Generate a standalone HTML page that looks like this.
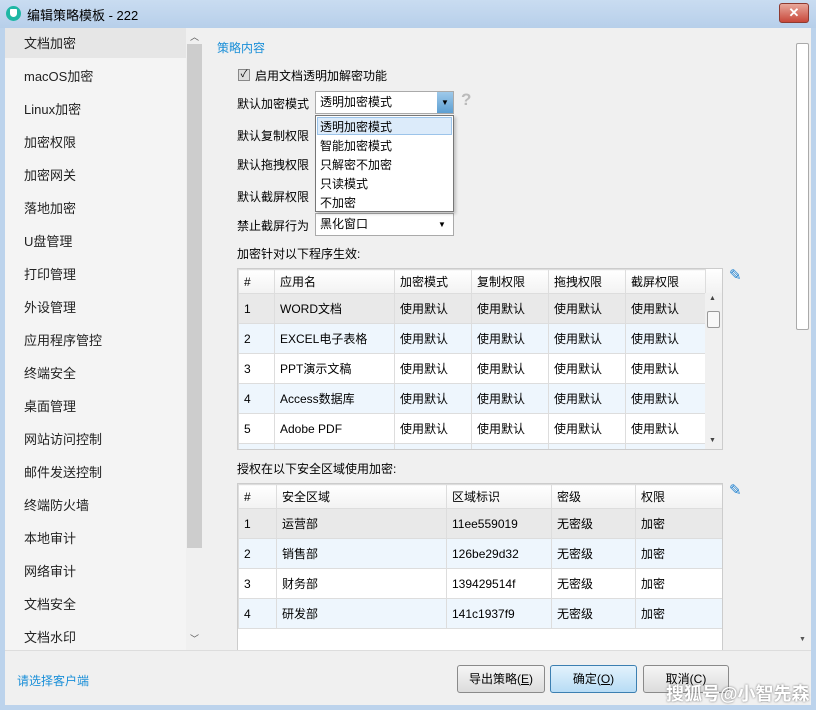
<!DOCTYPE html>
<html><head><meta charset="utf-8"><style>
*{margin:0;padding:0;box-sizing:border-box}
body{width:816px;height:710px;overflow:hidden;background:#bcd3ec;font-family:"Liberation Sans","Noto Sans CJK SC",sans-serif;font-size:12px;color:#000;position:relative}
.a{position:absolute}
.title{left:0;top:0;width:816px;height:28px;background:linear-gradient(#c9dcf1,#b7cfea)}
.side{left:5px;top:28px;width:181px;height:622px;background:#f4f4f4}
.side div{position:absolute;left:19px;font-size:13px;color:#222}
.cont{left:204px;top:28px;width:591px;height:622px;background:#f0f0f0}
.bot{left:5px;top:650px;width:806px;height:55px;background:#f0f0f0;border-top:1px solid #ddd}
.wrap{position:absolute;overflow:hidden;border:1px solid #ccc;background:#fff}
table{border-collapse:collapse;background:#fff;table-layout:fixed}
td{border:1px solid #ddd;padding-left:5px;font-size:12px;height:30px;white-space:nowrap;overflow:hidden}
tr.h td{height:24px;background:linear-gradient(#fff,#f2f2f2)}
tr.s td{background:#e9e9e9}
tr.b td{background:#eef6fd}
.btn{position:absolute;top:665px;height:28px;border:1px solid #8a8a8a;border-radius:3px;background:linear-gradient(#f6f6f6,#dcdcdc);text-align:center;line-height:26px;font-size:12px}
.combo{position:absolute;background:#fff;border:1px solid #aaa;height:23px;line-height:21px;padding-left:4px;font-size:12px}
.lbl{position:absolute;font-size:12px}
</style></head><body>
<div class="a title"></div>
<div class="a" style="left:6px;top:6px;width:15px;height:15px;border-radius:50%;background:#1fb7a4"></div>
<div class="a" style="left:10px;top:9px;width:7px;height:8px;background:#fff;border-radius:1px 1px 4px 4px"></div>
<div class="a" style="left:27px;top:5px;font-size:13px">编辑策略模板 - 222</div>
<div class="a" style="left:779px;top:3px;width:30px;height:20px;background:linear-gradient(#e8a89c,#c8483a);border:1px solid #8e3a30;border-radius:3px;color:#fff;text-align:center;line-height:18px;font-size:13px;font-weight:bold">✕</div>
<div class="a side">
<div style="left:0;top:0;width:181px;height:30px;background:#e6e6e6"></div>
<div style="top:5px">文档加密</div><div style="top:38px">macOS加密</div><div style="top:71px">Linux加密</div><div style="top:104px">加密权限</div><div style="top:137px">加密网关</div><div style="top:170px">落地加密</div><div style="top:203px">U盘管理</div><div style="top:236px">打印管理</div><div style="top:269px">外设管理</div><div style="top:302px">应用程序管控</div><div style="top:335px">终端安全</div><div style="top:368px">桌面管理</div><div style="top:401px">网站访问控制</div><div style="top:434px">邮件发送控制</div><div style="top:467px">终端防火墙</div><div style="top:500px">本地审计</div><div style="top:533px">网络审计</div><div style="top:566px">文档安全</div><div style="top:599px">文档水印</div>
</div>
<div class="a" style="left:186px;top:28px;width:18px;height:622px;background:#f0f0f0"></div>
<div class="a" style="left:187px;top:44px;width:15px;height:504px;background:#cdcdcd"></div>
<div class="a" style="left:190px;top:30px;font-size:9px;color:#555">︿</div>
<div class="a" style="left:190px;top:632px;font-size:9px;color:#555">﹀</div>
<div class="a cont"></div>
<div class="a" style="left:795px;top:28px;width:16px;height:622px;background:#f0f0f0"></div>
<div class="a" style="left:796px;top:43px;width:13px;height:287px;background:#fff;border:1px solid #aaa;border-radius:2px"></div>
<div class="a" style="left:217px;top:39px;color:#1a8fd8;font-size:12px">策略内容</div>
<div class="a" style="left:238px;top:69px;width:12px;height:12px;border:1px solid #888;background:#ddd;font-size:10px;line-height:10px;text-align:center">✓</div>
<div class="lbl" style="left:255px;top:67px">启用文档透明加解密功能</div>
<div class="lbl" style="left:237px;top:95px">默认加密模式</div>
<div class="lbl" style="left:237px;top:127px">默认复制权限</div>
<div class="lbl" style="left:237px;top:156px">默认拖拽权限</div>
<div class="lbl" style="left:237px;top:188px">默认截屏权限</div>
<div class="lbl" style="left:237px;top:217px">禁止截屏行为</div>
<div class="combo" style="left:315px;top:91px;width:139px">透明加密模式</div>
<div class="a" style="left:437px;top:92px;width:16px;height:21px;background:linear-gradient(#9ec9ea,#5d9fd2);font-size:8px;text-align:center;line-height:21px">▼</div>
<div class="a" style="left:461px;top:90px;font-size:17px;font-weight:bold;color:#bbb">?</div>
<div class="combo" style="left:315px;top:213px;width:139px">黑化窗口<span style="position:absolute;left:122px;font-size:8px">▼</span></div>
<div class="a" style="left:315px;top:115px;width:139px;height:97px;background:#fff;border:1px solid #777;box-shadow:2px 2px 3px rgba(0,0,0,.2)"></div>
<div class="a" style="left:317px;top:117px;width:135px;height:18px;background:#dcebfa;border:1px solid #9cc4ea"></div>
<div class="lbl" style="left:320px;top:118px">透明加密模式</div>
<div class="lbl" style="left:320px;top:137px">智能加密模式</div>
<div class="lbl" style="left:320px;top:156px">只解密不加密</div>
<div class="lbl" style="left:320px;top:175px">只读模式</div>
<div class="lbl" style="left:320px;top:194px">不加密</div>
<div class="lbl" style="left:237px;top:245px">加密针对以下程序生效:</div>
<div class="wrap" style="left:237px;top:268px;width:486px;height:182px">
<table style="width:468px">
<tr class="h"><td style="width:36px">#</td><td style="width:120px">应用名</td><td style="width:77px">加密模式</td><td style="width:77px">复制权限</td><td style="width:77px">拖拽权限</td><td>截屏权限</td></tr>
<tr class="s"><td>1</td><td>WORD文档</td><td>使用默认</td><td>使用默认</td><td>使用默认</td><td>使用默认</td></tr>
<tr class="b"><td>2</td><td>EXCEL电子表格</td><td>使用默认</td><td>使用默认</td><td>使用默认</td><td>使用默认</td></tr>
<tr><td>3</td><td>PPT演示文稿</td><td>使用默认</td><td>使用默认</td><td>使用默认</td><td>使用默认</td></tr>
<tr class="b"><td>4</td><td>Access数据库</td><td>使用默认</td><td>使用默认</td><td>使用默认</td><td>使用默认</td></tr>
<tr><td>5</td><td>Adobe PDF</td><td>使用默认</td><td>使用默认</td><td>使用默认</td><td>使用默认</td></tr>
<tr class="b"><td></td><td></td><td></td><td></td><td></td><td></td></tr>
</table>
<div class="a" style="left:467px;top:0;width:18px;height:24px;background:linear-gradient(#fff,#f2f2f2);border-left:1px solid #ddd"></div>
<div class="a" style="left:467px;top:24px;width:18px;height:158px;background:#f0f0f0"></div>
<div class="a" style="left:471px;top:26px;font-size:7px;color:#444">▲</div>
<div class="a" style="left:471px;top:168px;font-size:7px;color:#444">▼</div>
<div class="a" style="left:469px;top:42px;width:13px;height:17px;border:1px solid #999;background:#f8f8f8;border-radius:2px"></div>
</div>
<div class="a" style="left:729px;top:266px;color:#1a7fd0;font-size:15px">✎</div>
<div class="lbl" style="left:237px;top:460px">授权在以下安全区域使用加密:</div>
<div class="wrap" style="left:237px;top:483px;width:486px;height:167px;border-bottom:none">
<table style="width:485px">
<tr class="h"><td style="width:38px">#</td><td style="width:170px">安全区域</td><td style="width:105px">区域标识</td><td style="width:84px">密级</td><td>权限</td></tr>
<tr class="s"><td>1</td><td>运营部</td><td>11ee559019</td><td>无密级</td><td>加密</td></tr>
<tr class="b"><td>2</td><td>销售部</td><td>126be29d32</td><td>无密级</td><td>加密</td></tr>
<tr><td>3</td><td>财务部</td><td>139429514f</td><td>无密级</td><td>加密</td></tr>
<tr class="b"><td>4</td><td>研发部</td><td>141c1937f9</td><td>无密级</td><td>加密</td></tr>
</table>
</div>
<div class="a" style="left:729px;top:481px;color:#1a7fd0;font-size:15px">✎</div>
<div class="a" style="left:799px;top:636px;font-size:7px;color:#555">▼</div>
<div class="a bot"></div>
<div class="a" style="left:17px;top:672px;color:#1a8fd8;font-size:12px">请选择客户端</div>
<div class="btn" style="left:457px;width:88px">导出策略(<u>E</u>)</div>
<div class="btn" style="left:550px;width:87px;background:linear-gradient(#e3f2fc,#b7dcf5);border-color:#3c7fb1">确定(<u>O</u>)</div>
<div class="btn" style="left:643px;width:86px">取消(C)</div>
<div class="a" style="left:666px;top:680px;color:#fff;font-size:18px;font-weight:bold;text-shadow:0 0 2px #666">搜狐号@小智先森</div>
</body></html>
